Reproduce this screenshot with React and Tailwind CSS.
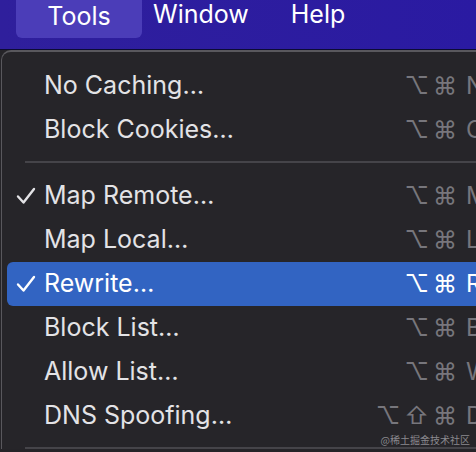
import React from 'react'

const items = [
  { label: 'No Caching…', mods: '⌥⌘', key: 'N' },
  { label: 'Block Cookies…', mods: '⌥⌘', key: 'C' },
  'sep',
  { label: 'Map Remote…', mods: '⌥⌘', key: 'M', checked: true },
  { label: 'Map Local…', mods: '⌥⌘', key: 'L' },
  { label: 'Rewrite…', mods: '⌥⌘', key: 'R', checked: true, active: true },
  { label: 'Block List…', mods: '⌥⌘', key: 'B' },
  { label: 'Allow List…', mods: '⌥⌘', key: 'W' },
  { label: 'DNS Spoofing…', mods: '⌥⇧⌘', key: 'D' },
  'sep',
]

const Check = () => (
  <svg width="20" height="18" viewBox="0 0 20 18" fill="none" stroke="currentColor" strokeWidth="2.4" strokeLinecap="round" strokeLinejoin="round">
    <path d="M2 9.5 L7.5 15.5 L18 2" />
  </svg>
)

const MenuRow = ({ item }) => (
  <div
    className={`flex h-[44px] items-center rounded-l-[6px] ${
      item.active ? 'bg-[#3264c2] text-white' : 'text-[#e3e3e6]'
    }`}
  >
    <div className="flex w-[37px] justify-end pr-[8px]">{item.checked && <Check />}</div>
    <span className="flex-1 whitespace-nowrap">{item.label}</span>
    <div className={`flex text-[24px] ${item.active ? 'text-white' : 'text-[#77767c]'}`}>
      <span className="whitespace-nowrap tracking-[4px]">{item.mods}</span>
      <span className="w-[40px] pl-[5px]">{item.key}</span>
    </div>
  </div>
)

export default function App() {
  return (
    <div
      className="relative h-[452px] w-[476px] overflow-hidden bg-[#252428] text-[25px]"
      style={{ fontFamily: 'Inter, "Noto Sans", sans-serif' }}
    >
      {/* menu bar */}
      <div className="flex h-[50px] items-start border-b border-[#0c0b35] bg-gradient-to-r from-[#2f1f9c] to-[#2a1aa2] text-white">
        <div className="w-[16px]" />
        <div className="flex h-[38px] w-[126px] items-center justify-center rounded-b-[6px] bg-[#4b3db8] pb-[4px]">
          Tools
        </div>
        <div className="flex h-[30px] items-center pl-[11px]">Window</div>
        <div className="flex h-[30px] items-center pl-[42px]">Help</div>
      </div>

      {/* dropdown */}
      <div className="ml-[1px] w-[500px] rounded-tl-[10px] border-l border-t-2 border-[#59585d] bg-[#262529] pl-[5px] pt-[12px]">
        {items.map((item, i) =>
          item === 'sep' ? (
            <div key={i} className="ml-[18px] mb-[11px] mt-[9px] h-[2px] bg-[#454449]" />
          ) : (
            <MenuRow key={i} item={item} />
          ),
        )}
      </div>

      <div
        className="absolute bottom-[5px] right-[6px] text-[10px] text-[#8a898e]"
        style={{ fontFamily: '"Noto Sans CJK SC", sans-serif' }}
      >
        @稀土掘金技术社区
      </div>
    </div>
  )
}
